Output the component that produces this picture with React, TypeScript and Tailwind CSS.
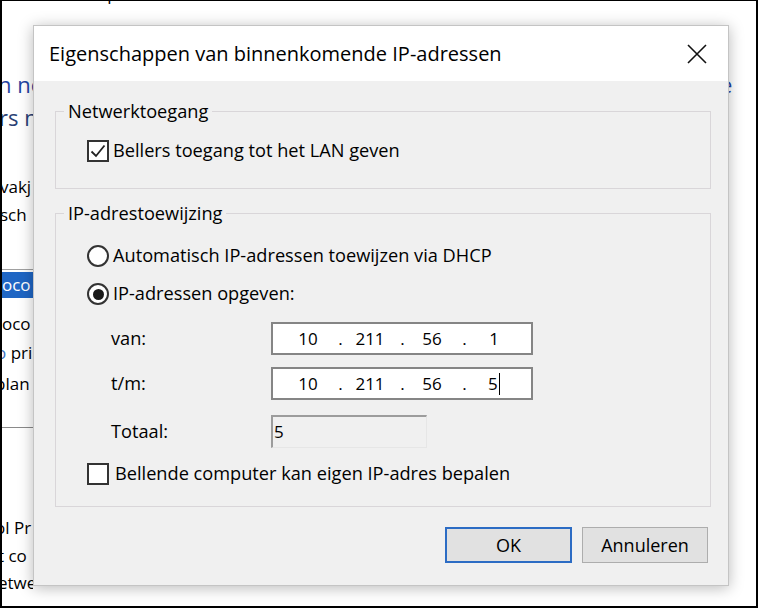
import React from 'react';

const font = { fontFamily: '"Open Sans", "Liberation Sans", sans-serif' };

const Checkbox = ({ checked }: { checked?: boolean }) => (
  <span className="w-[22px] h-[22px] border-2 border-[#333] bg-white flex items-center justify-center shrink-0">
    {checked && (
      <svg width="18" height="18" viewBox="0 0 18 18">
        <path d="M2.5 9.5 L7 14 L15.5 3.5" fill="none" stroke="#222" strokeWidth="1.8" />
      </svg>
    )}
  </span>
);

const Radio = ({ checked }: { checked?: boolean }) => (
  <span className="w-[22px] h-[22px] rounded-full border-2 border-[#333] bg-white flex items-center justify-center shrink-0">
    {checked && <span className="w-[11px] h-[11px] rounded-full bg-[#1a1a1a]" />}
  </span>
);

const IpField = ({ octets, caret }: { octets: string[]; caret?: boolean }) => (
  <div className="w-[262px] h-[33px] bg-white border-2 border-[#858585] flex items-center pl-[10px] text-[17px] text-black">
    {octets.map((o, i) => (
      <React.Fragment key={i}>
        {i > 0 && <span className="w-[12px] text-center pl-[3px]">.</span>}
        <span className="w-[50px] text-center">
          {o}
          {caret && i === 3 && <span className="inline-block w-[1.5px] h-[22px] bg-black align-middle ml-[1px] -mt-[2px]" />}
        </span>
      </React.Fragment>
    ))}
  </div>
);

export default function App() {
  return (
    <div
      className="w-[758px] h-[608px] relative overflow-hidden bg-white border-x-2 border-b-2 border-t border-black flex text-black"
      style={font}
    >
      {/* achterliggend venster, links */}
      <div className="w-[31px] shrink-0 overflow-hidden flex flex-col whitespace-nowrap">
        <div className="h-[66px]" />
        <div className="h-[34px] text-[22px] leading-[34px] text-[#1f45a2] -ml-[4px]">n ne</div>
        <div className="h-[32px] text-[22px] leading-[32px] text-[#2a3f74] -ml-[3px]">rs n</div>
        <div className="h-[40px]" />
        <div className="h-[28px] text-[17px] leading-[28px] -ml-[2px]">vakj</div>
        <div className="h-[28px] text-[17px] leading-[28px] -ml-[2px]">sch</div>
        <div className="h-[41px] border-b border-[#a0a0a0]" />
        <div className="h-[26px] mt-[2px] text-[17px] leading-[26px] bg-[#1f66c4] text-white -ml-[1px] pl-[1px]">oco</div>
        <div className="h-[28px] mt-[12px] text-[17px] leading-[28px]">oco</div>
        <div className="h-[30px] text-[17px] leading-[30px] -ml-[6px]"><span className="text-[#3a6fc0]">o</span> pri</div>
        <div className="h-[32px] text-[17px] leading-[32px] -ml-[7px]">plan</div>
        <div className="h-[28px] border-b border-[#8a8a8a]" />
        <div className="h-[86px]" />
        <div className="h-[28px] text-[17px] leading-[28px] -ml-[7px]">ol Pr</div>
        <div className="h-[27px] text-[17px] leading-[27px] -ml-[4px]">t co</div>
        <div className="h-[27px] text-[17px] leading-[27px] -ml-[4px]">etwe</div>
      </div>

      <div className="flex-1 overflow-hidden whitespace-nowrap">
        <div className="text-[17px] leading-[24px] -mt-[19px] ml-[61px]">Opties</div>
      </div>

      {/* achterliggend venster, rechts */}
      <div className="w-[28px] shrink-0 overflow-hidden flex flex-col whitespace-nowrap">
        <div className="h-[66px]" />
        <div className="h-[34px] text-[22px] leading-[34px] text-[#1f45a2] -ml-[8px]">e</div>
      </div>

      {/* dialoogvenster */}
      <div className="absolute left-[31px] top-[24px] w-[696px] h-[561px] bg-[#f0f0f0] border border-[#c4c4c4] shadow-[0_2px_14px_rgba(0,0,0,0.28)] flex flex-col">
        <div className="h-[55px] bg-white flex items-center justify-between pl-[15px] pr-[20px] shrink-0">
          <span className="text-[20px]">Eigenschappen van binnenkomende IP-adressen</span>
          <svg width="22" height="22" viewBox="0 0 22 22">
            <path d="M2 2 L20 20 M20 2 L2 20" stroke="#111" strokeWidth="1.6" />
          </svg>
        </div>

        <div className="flex-1 flex flex-col pl-[21px] pr-[17px] text-[18.2px]">
          <fieldset className="mt-[18px] h-[90px] border border-[#d9d6d9]">
            <legend className="ml-[8px] px-[4px] leading-[24px]">Netwerktoegang</legend>
            <div className="flex items-center gap-[4px] mt-[14px] pl-[31px]">
              <Checkbox checked />
              <span>Bellers toegang tot het LAN geven</span>
            </div>
          </fieldset>

          <fieldset className="mt-[12px] h-[306px] border border-[#d9d6d9]">
            <legend className="ml-[8px] px-[4px] leading-[24px]">IP-adrestoewijzing</legend>
            <div className="flex flex-col pl-[31px]">
              <div className="flex items-center gap-[4px] h-[22px] mt-[20px]">
                <Radio />
                <span>Automatisch IP-adressen toewijzen via DHCP</span>
              </div>
              <div className="flex items-center gap-[4px] h-[22px] mt-[16px]">
                <Radio checked />
                <span>IP-adressen opgeven:</span>
              </div>
              <div className="flex items-center h-[33px] mt-[17px] pl-[24px]">
                <span className="w-[160px]">van:</span>
                <IpField octets={['10', '211', '56', '1']} />
              </div>
              <div className="flex items-center h-[33px] mt-[12px] pl-[24px]">
                <span className="w-[160px]">t/m:</span>
                <IpField octets={['10', '211', '56', '5']} caret />
              </div>
              <div className="flex items-center h-[33px] mt-[15px] pl-[24px]">
                <span className="w-[160px]">Totaal:</span>
                <div className="w-[156px] h-[33px] border-t-2 border-l-2 border-r border-b border-t-[#9c9c9c] border-l-[#9c9c9c] border-r-[#e6e6e6] border-b-[#e6e6e6] pl-[1px] flex items-center text-[17px]">
                  5
                </div>
              </div>
              <div className="flex items-center gap-[6px] h-[22px] mt-[15px]">
                <Checkbox />
                <span>Bellende computer kan eigen IP-adres bepalen</span>
              </div>
            </div>
          </fieldset>

          <div className="flex justify-end gap-[10px] mt-[20px] pr-[3px]">
            <button className="w-[127px] h-[36px] bg-[#e1e1e1] border-2 border-[#2c6cc4] text-[18px]">OK</button>
            <button className="w-[126px] h-[36px] bg-[#e1e1e1] border border-[#adadad] text-[18px]">Annuleren</button>
          </div>
        </div>
      </div>
    </div>
  );
}
